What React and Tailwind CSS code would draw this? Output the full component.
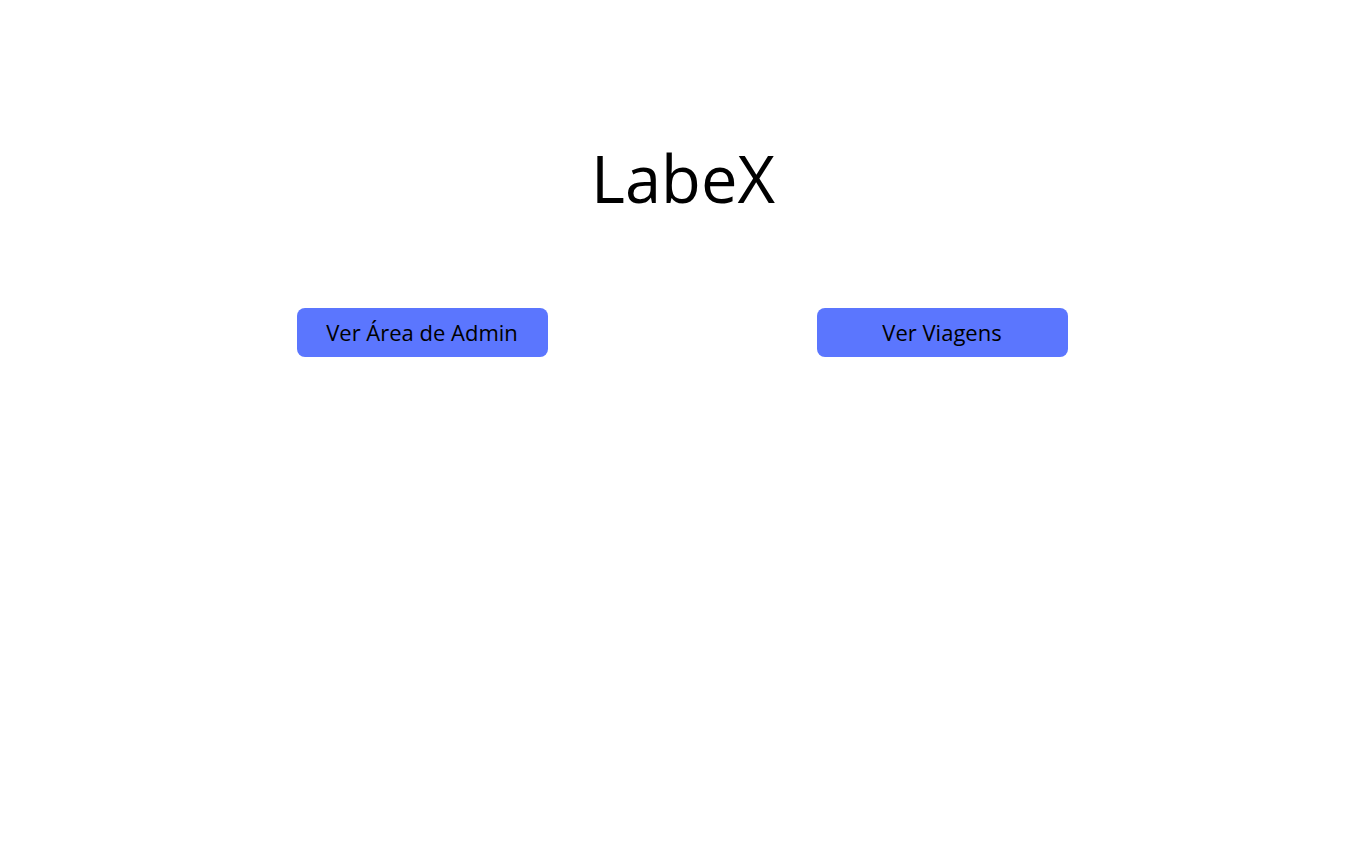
import React from 'react';

const App = () => {
  return (
    <div className="min-h-screen bg-white text-black" style={{ fontFamily: '"Open Sans", "Noto Sans", sans-serif' }}>
      <div className="flex justify-center pt-[128px]">
        <h1 className="text-[65px] leading-[100px] font-normal">LabeX</h1>
      </div>
      <div className="flex justify-center gap-[269px] mt-[80px] pr-[2px]">
        <button className="w-[251px] h-[49px] rounded-lg bg-[#5b76fe] text-[22px] text-black">
          Ver Área de Admin
        </button>
        <button className="w-[251px] h-[49px] rounded-lg bg-[#5b76fe] text-[22px] text-black">
          Ver Viagens
        </button>
      </div>
    </div>
  );
};

export default App;
